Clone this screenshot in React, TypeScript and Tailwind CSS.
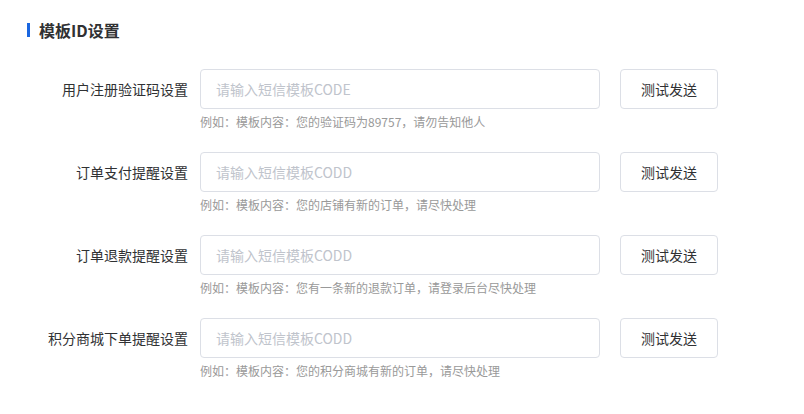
const ROWS = [
  { label: "用户注册验证码设置", placeholder: "请输入短信模板CODE", hint: "例如：模板内容：您的验证码为89757，请勿告知他人" },
  { label: "订单支付提醒设置", placeholder: "请输入短信模板CODD", hint: "例如：模板内容：您的店铺有新的订单，请尽快处理" },
  { label: "订单退款提醒设置", placeholder: "请输入短信模板CODD", hint: "例如：模板内容：您有一条新的退款订单，请登录后台尽快处理" },
  { label: "积分商城下单提醒设置", placeholder: "请输入短信模板CODD", hint: "例如：模板内容：您的积分商城有新的订单，请尽快处理" },
];

export default function App() {
  return (
    <div
      className="w-[804px] h-[414px] bg-white text-[#303133]"
      style={{ fontFamily: '"Noto Sans CJK SC", "Noto Sans", sans-serif' }}
    >
      <div className="flex items-center pl-[27px] pt-[19px] h-[40px]">
        <span className="w-[3px] h-[14px] bg-[#1a66e0]" />
        <span className="ml-[9px] text-[16px] font-bold leading-[20px] text-[#303133]">模板ID设置</span>
      </div>
      <div className="mt-[29px] flex flex-col gap-[23px]">
        {ROWS.map((r) => (
          <div key={r.label} className="flex">
            <div className="w-[188px] h-[40px] flex items-center justify-end text-[14px] text-[#303133]">
              {r.label}
            </div>
            <div className="ml-[12px] w-[400px]">
              <input
                placeholder={r.placeholder}
                className="w-full h-[40px] rounded-[4px] border border-[#dcdfe6] px-[15px] text-[14px] outline-none placeholder:text-[#c0c4cc]"
              />
              <div className="mt-[6px] h-[14px] text-[12px] leading-[14px] text-[#999999]">{r.hint}</div>
            </div>
            <button className="ml-[20px] w-[98px] h-[40px] rounded-[4px] border border-[#dcdfe6] bg-white text-[14px] text-[#303133]">
              测试发送
            </button>
          </div>
        ))}
      </div>
    </div>
  );
}
